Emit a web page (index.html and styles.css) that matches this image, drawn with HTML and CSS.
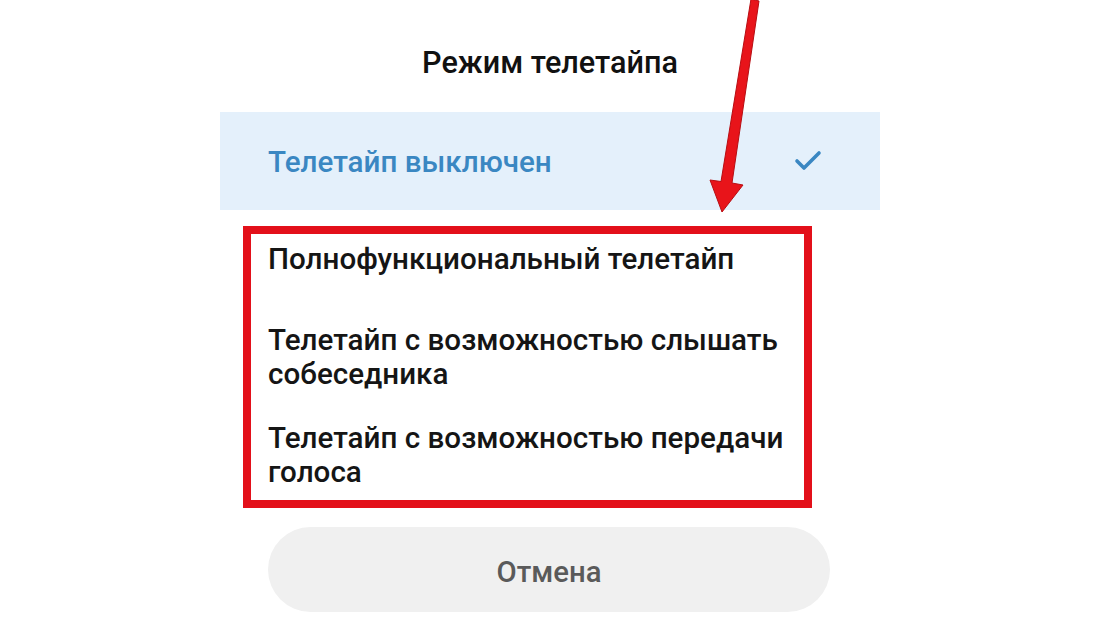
FILE: index.html
```html
<!DOCTYPE html>
<html lang="ru">
<head>
<meta charset="utf-8">
<title>Режим телетайпа</title>
<link rel="stylesheet" href="styles.css">
</head>
<body>
<div class="page">
  <div class="sheet">
    <div class="title">Режим телетайпа</div>
    <div class="row selected">
      <span class="row-text">Телетайп выключен</span>
      <svg class="check" width="28" height="24" viewBox="0 0 28 24"><polyline points="3,12 10,19 25,4" fill="none" stroke="#3a87c2" stroke-width="3.6" stroke-linecap="round" stroke-linejoin="round"/></svg>
    </div>
    <div class="row"><span class="row-text">Полнофункциональный телетайп</span></div>
    <div class="row"><span class="row-text">Телетайп с возможностью слышать<br>собеседника</span></div>
    <div class="row"><span class="row-text">Телетайп с возможностью передачи<br>голоса</span></div>
    <div class="btn">Отмена</div>
  </div>
  <div class="annot-box"></div>
  <svg class="arrow" width="1100" height="619" viewBox="0 0 1100 619">
    <polygon points="751,-1 759,1 732,183 743,185 722,212 710,180 721,181.5" fill="#e8141a" stroke="#b80d12" stroke-width="1" stroke-linejoin="round"/>
  </svg>
</div>
</body>
</html>
```
FILE: styles.css
```css
html, body {
  margin: 0;
  padding: 0;
  background: #ffffff;
}
.page {
  position: relative;
  width: 1100px;
  height: 619px;
  overflow: hidden;
  font-family: Roboto, "Noto Sans", sans-serif;
}
.sheet {
  width: 660px;
  margin: 0 auto;
  display: flex;
  flex-direction: column;
}
.title {
  height: 112px;
  box-sizing: border-box;
  padding-top: 46px;
  text-align: center;
  font-size: 30.6px;
  line-height: 34px;
  font-weight: 500;
  color: #111111;
}
.row {
  min-height: 98px;
  box-sizing: border-box;
  padding: 15px 50px 15px 48px;
  display: flex;
  align-items: center;
  justify-content: space-between;
}
.row-text {
  font-size: 29.6px;
  line-height: 34px;
  font-weight: 500;
  color: #151515;
}
.selected {
  background: #e4f0fb;
}
.selected .row-text {
  color: #3a87c2;
  position: relative;
  top: 1px;
}
.check {
  margin-right: 8px;
}
.btn {
  margin: 23px 50px 0 48px;
  height: 85px;
  border-radius: 43px;
  background: #f0f0f0;
  display: flex;
  align-items: center;
  justify-content: center;
  font-size: 29.3px;
  font-weight: 500;
  color: #5a5a5a;
  padding-top: 4px;
  box-sizing: border-box;
}
.annot-box {
  position: absolute;
  left: 243px;
  top: 226px;
  width: 569px;
  height: 282px;
  box-sizing: border-box;
  border: 8px solid #e3101a;
}
.arrow {
  position: absolute;
  left: 0;
  top: 0;
}
```
